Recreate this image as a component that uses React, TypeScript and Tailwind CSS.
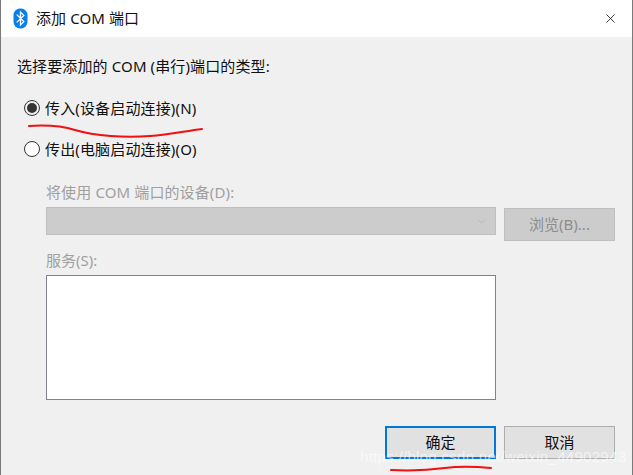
import { X, ChevronDown } from 'lucide-react';

const font = "font-['Noto_Sans','Noto_Sans_CJK_SC',sans-serif]";

function BluetoothIcon() {
  return (
    <svg width="15" height="21" viewBox="0 0 15 21">
      <rect x="0.5" y="0.5" width="14" height="20" rx="6.5" fill="#0a7fe6" />
      <path d="M3.8 6.6 L10.8 13.6 L7.5 17 L7.5 4 L10.8 7.4 L3.8 14.4" fill="none" stroke="#fff" strokeWidth="1.3" />
    </svg>
  );
}

function Radio({ checked, label }: { checked?: boolean; label: string }) {
  return (
    <div className="flex items-center h-[20px] ml-[23px]">
      <div className={`w-[16px] h-[16px] rounded-full border border-[#333] flex items-center justify-center ${checked ? 'bg-[#efefef]' : 'bg-white'}`}>
        {checked && <div className="w-[10px] h-[10px] rounded-full bg-[#333]" />}
      </div>
      <span className="ml-[5px] text-[15px] leading-[20px] tracking-[0.15px] text-[#111]">{label}</span>
    </div>
  );
}

export default function App() {
  return (
    <div className={`relative w-[633px] h-[475px] overflow-hidden bg-[#f0f0f0] border-x border-[#7a7a7a] ${font}`}>
      {/* Title bar */}
      <div className="h-[37px] bg-white flex items-center pl-[12px] pr-[14px]">
        <BluetoothIcon />
        <span className="ml-[8px] text-[15px] tracking-[0.1px] text-[#111]">添加 COM 端口</span>
        <X className="ml-auto w-[15px] h-[15px] text-black" strokeWidth={1.2} absoluteStrokeWidth />
      </div>

      <div className="flex flex-col pt-[18px]">
        <div className="ml-[16px] h-[22px] text-[15px] leading-[22px] tracking-[0.12px] text-[#111]">选择要添加的 COM (串行)端口的类型:</div>

        <div className="mt-[21px]">
          <Radio checked label="传入(设备启动连接)(N)" />
        </div>
        <div className="mt-[21px]">
          <Radio label="传出(电脑启动连接)(O)" />
        </div>

        <div className="mt-[22px] ml-[45px] h-[22px] text-[15px] leading-[22px] tracking-[0.12px] text-[#a0a0a0]">将使用 COM 端口的设备(D):</div>
        <div className="mt-[4px] ml-[45px] flex items-start">
          <div className="w-[450px] h-[28px] bg-[#cccccc] border border-[#bfbfbf] flex items-center justify-end pr-[7px]">
            <ChevronDown className="w-[13px] h-[13px] text-[#a8a8a8]" strokeWidth={1} />
          </div>
          <div className="ml-[8px] mt-px w-[111px] h-[33px] bg-[#cccccc] border border-[#bfbfbf] flex items-center justify-center text-[15px] text-[#8c8c8c]">浏览(B)...</div>
        </div>

        <div className="mt-[8px] ml-[45px] h-[22px] text-[15px] leading-[22px] text-[#a0a0a0]">服务(S):</div>
        <div className="mt-[4px] ml-[45px] w-[450px] h-[125px] bg-white border border-[#82828c]" />

        <div className="mt-[26px] flex ml-[384px] gap-[8px]">
          <div className="w-[111px] h-[33px] bg-[#e1e1e1] border-2 border-[#0078d7] flex items-center justify-center text-[15px] text-[#111]">确定</div>
          <div className="w-[111px] h-[33px] bg-[#e1e1e1] border border-[#adadad] flex items-center justify-center text-[15px] text-[#111]">取消</div>
        </div>
      </div>

      {/* Red pen marks */}
      <svg className="absolute left-[-1px] top-0 pointer-events-none" width="633" height="475" viewBox="0 0 633 475">
        <path d="M29 126 C45 125 62 126 75 130 C95 136 125 138 150 136 C170 135 185 131 202 129" fill="none" stroke="#f01010" strokeWidth="2" strokeLinecap="round" />
        <path d="M391 470 C410 471 430 470 445 468 C460 466 480 467 491 468" fill="none" stroke="#f01010" strokeWidth="2" strokeLinecap="round" />
      </svg>

      {/* Watermark */}
      <div className="absolute left-[359px] top-[447px] text-[15px] leading-[20px] tracking-[0.3px] text-white/60 font-['Liberation_Sans',sans-serif] whitespace-nowrap">https://blog.csdn.net/weixin_44902943</div>
    </div>
  );
}
